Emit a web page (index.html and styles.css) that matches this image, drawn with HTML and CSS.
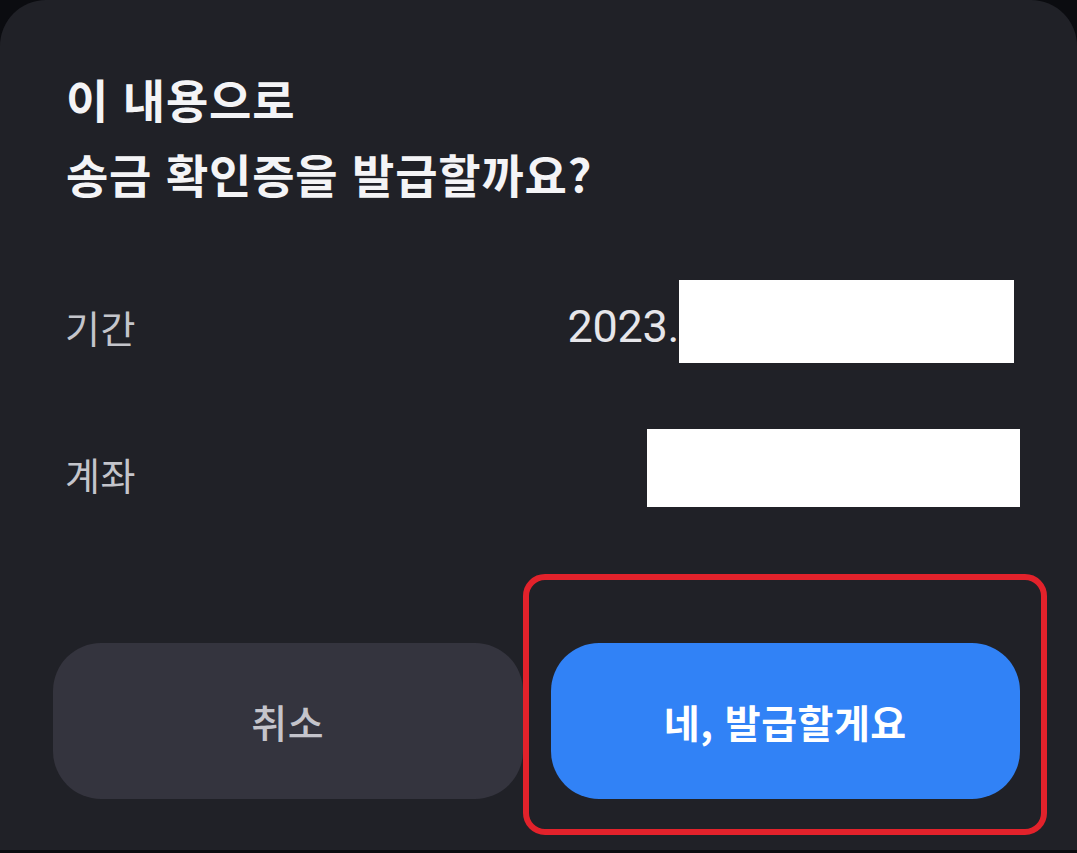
FILE: index.html
```html
<!DOCTYPE html>
<html lang="ko">
<head>
<meta charset="utf-8">
<title>송금 확인증 발급</title>
<link rel="stylesheet" href="styles.css">
</head>
<body>
<div class="sheet">
  <h1 class="title">이 내용으로<br>송금 확인증을 발급할까요?</h1>
  <div class="rows">
    <div class="row">
      <span class="label">기간</span>
      <span class="value value-period"><span class="num">2023.</span><span class="redact redact-period"></span></span>
    </div>
    <div class="row">
      <span class="label">계좌</span>
      <span class="value value-account"><span class="redact redact-account"></span></span>
    </div>
  </div>
  <div class="actions">
    <button class="btn btn-cancel">취소</button>
    <button class="btn btn-confirm">네, 발급할게요</button>
  </div>
  <div class="highlight"></div>
</div>
</body>
</html>
```

FILE: styles.css
```css
html, body {
  margin: 0;
  padding: 0;
}
body {
  background: #0b0c10;
  width: 1077px;
  height: 853px;
  overflow: hidden;
  font-family: "Noto Sans CJK KR", "Noto Sans", sans-serif;
}
.sheet {
  position: relative;
  box-sizing: border-box;
  height: 850px;
  background: #202127;
  border-radius: 46px 46px 0 0;
  padding: 61px 57px 0 53px;
}
.title {
  margin: 0;
  padding-left: 13px;
  font-size: 46px;
  line-height: 75px;
  font-weight: 700;
  color: #f4f4f6;
  letter-spacing: 0.8px;
}
.rows {
  margin-top: 65px;
  padding-left: 12px;
  display: flex;
  flex-direction: column;
  gap: 47px;
}
.row {
  height: 100px;
  display: flex;
  align-items: center;
  justify-content: space-between;
}
.label {
  font-size: 38px;
  color: #c4c5cb;
  letter-spacing: 0.5px;
}
.value {
  display: flex;
  align-items: center;
}
.value-period {
  margin-right: 6px;
  margin-top: -10px;
}
.value-account {
  margin-top: -10px;
}
.num {
  font-family: Roboto, "Noto Sans CJK KR", sans-serif;
  font-size: 45px;
  color: #e6e6ea;
  margin-top: 10px;
  letter-spacing: -0.3px;
}
.redact {
  display: block;
  background: #ffffff;
}
.redact-period {
  width: 335px;
  height: 83px;
}
.redact-account {
  width: 373px;
  height: 78px;
}
.actions {
  margin-top: 120px;
  display: flex;
  gap: 28px;
}
.btn {
  flex: 1;
  height: 156px;
  border: none;
  border-radius: 48px;
  font-family: "Noto Sans CJK KR", "Noto Sans", sans-serif;
  font-size: 39px;
  font-weight: 600;
  letter-spacing: 0.5px;
}
.btn-cancel {
  background: #34343e;
  color: #c4c4cb;
  font-weight: 500;
}
.btn-confirm {
  background: #3182f6;
  color: #ffffff;
}
.highlight {
  position: absolute;
  left: 523px;
  top: 574px;
  width: 524px;
  height: 261px;
  box-sizing: border-box;
  border: 6px solid #e2222b;
  border-radius: 22px;
}
```
